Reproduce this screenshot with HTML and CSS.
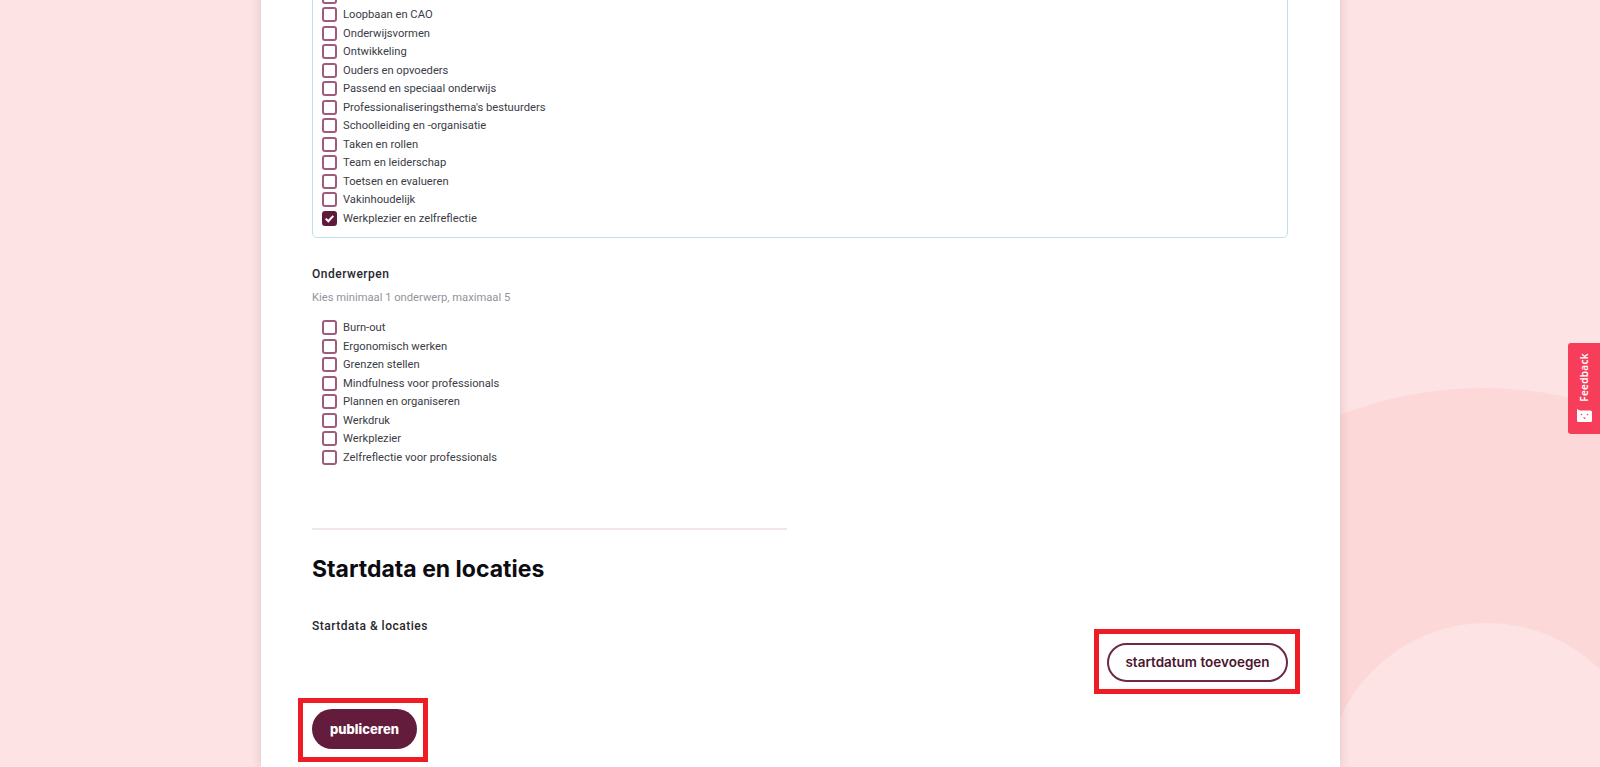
FILE: index.html
```html
<!DOCTYPE html>
<html lang="nl">

<head>
  <meta charset="UTF-8">
  <title>Training bewerken</title>
  <link rel="stylesheet" href="styles.css">
</head>

<body>
  <div class="bg">
    <div class="bg-circle bg-circle--large"></div>
    <div class="bg-circle bg-circle--small"></div>
  </div>

  <main class="card">
    <ul class="check-list check-list--panel">
      <li class="check-row"><span class="check-box"></span></li>
      <li class="check-row"><span class="check-box"></span>Loopbaan en CAO</li>
      <li class="check-row"><span class="check-box"></span>Onderwijsvormen</li>
      <li class="check-row"><span class="check-box"></span>Ontwikkeling</li>
      <li class="check-row"><span class="check-box"></span>Ouders en opvoeders</li>
      <li class="check-row"><span class="check-box"></span>Passend en speciaal onderwijs</li>
      <li class="check-row"><span class="check-box"></span>Professionaliseringsthema's bestuurders</li>
      <li class="check-row"><span class="check-box"></span>Schoolleiding en -organisatie</li>
      <li class="check-row"><span class="check-box"></span>Taken en rollen</li>
      <li class="check-row"><span class="check-box"></span>Team en leiderschap</li>
      <li class="check-row"><span class="check-box"></span>Toetsen en evalueren</li>
      <li class="check-row"><span class="check-box"></span>Vakinhoudelijk</li>
      <li class="check-row">
        <span class="check-box check-box--on">
          <svg viewBox="0 0 16 16" width="13" height="13"><path d="M2.5 8.2 L6.3 12 L13.5 4.2" fill="none" stroke="#fff" stroke-width="3"></path></svg>
        </span>Werkplezier en zelfreflectie
      </li>
    </ul>

    <h3 class="field-label field-label--topics">Onderwerpen</h3>
    <p class="field-hint">Kies minimaal 1 onderwerp, maximaal 5</p>

    <ul class="check-list check-list--plain">
      <li class="check-row"><span class="check-box"></span>Burn-out</li>
      <li class="check-row"><span class="check-box"></span>Ergonomisch werken</li>
      <li class="check-row"><span class="check-box"></span>Grenzen stellen</li>
      <li class="check-row"><span class="check-box"></span>Mindfulness voor professionals</li>
      <li class="check-row"><span class="check-box"></span>Plannen en organiseren</li>
      <li class="check-row"><span class="check-box"></span>Werkdruk</li>
      <li class="check-row"><span class="check-box"></span>Werkplezier</li>
      <li class="check-row"><span class="check-box"></span>Zelfreflectie voor professionals</li>
    </ul>

    <hr class="divider">

    <h2 class="section-title">Startdata en locaties</h2>
    <h3 class="field-label field-label--dates">Startdata &amp; locaties</h3>

    <div class="add-row">
      <span class="marked marked--add">
        <button class="btn btn--outline" type="button">startdatum toevoegen</button>
      </span>
    </div>

    <span class="marked marked--publish">
      <button class="btn btn--solid" type="button">publiceren</button>
    </span>
  </main>

  <aside class="feedback-tab">
    <span class="feedback-tab__text">Feedback</span>
    <svg class="feedback-tab__icon" viewBox="0 0 15 13" width="15" height="13">
      <path d="M0 0 L3 1.5 L13.5 1.5 Q15 1.5 15 3 L15 11.5 Q15 13 13.5 13 L1.5 13 Q0 13 0 11.5 Z" fill="#fff"></path>
      <circle cx="4.5" cy="5.5" r="0.8" fill="#f63e5b"></circle>
      <circle cx="10.5" cy="5.5" r="0.8" fill="#f63e5b"></circle>
      <path d="M6 8.5 L9 8.5 L7.5 10.2 Z" fill="#f63e5b"></path>
    </svg>
  </aside>
</body>

</html>
```
FILE: styles.css
```css
html,
body {
  height: 100%;
}

body {
  background-color: #fde3e4;
  color: #3c3c46;
  font-family: Roboto, "Noto Sans", Arial, sans-serif;
  font-size: 11.2px;
  margin: 0;
  overflow: hidden;
  position: relative;
}

.bg {
  inset: 0;
  overflow: hidden;
  position: absolute;
}

.bg-circle {
  border-radius: 50%;
  position: absolute;
}

.bg-circle--large {
  background-color: #fdd8d8;
  height: 784px;
  left: 1091px;
  top: 388px;
  width: 784px;
}

.bg-circle--small {
  background-color: #fde3e4;
  height: 322px;
  left: 1326px;
  top: 623px;
  width: 322px;
}

.card {
  background-color: #fff;
  box-shadow: 0 0 10px rgba(120, 60, 70, 0.2);
  box-sizing: border-box;
  height: calc(100% + 22px);
  margin: 0 260px 0 261px;
  padding: 0 52px 0 51px;
  position: relative;
}

.check-list {
  list-style: none;
  margin: 0;
}

.check-list--panel {
  border: 1px solid #bfdded;
  border-radius: 5px;
  margin-top: -22px;
  padding: 8px 9px 9px;
}

.check-list--plain {
  margin-top: 11px;
  padding: 0 10px;
}

.check-row {
  align-items: center;
  display: flex;
  gap: 6px;
  height: 18.5px;
}

.check-box {
  align-items: center;
  background-color: #fff;
  border: 2px solid #a05a7c;
  border-radius: 3px;
  box-sizing: border-box;
  display: flex;
  flex: none;
  height: 15px;
  justify-content: center;
  width: 15px;
}

.check-box--on {
  background-color: #5f1a3a;
  border-color: #5f1a3a;
}

.field-label {
  color: #26262e;
  font-size: 12px;
  font-weight: 500;
  letter-spacing: 0.5px;
  line-height: 20px;
  margin: 0;
}

.field-label--topics {
  margin-top: 26px;
}

.field-label--dates {
  margin-top: 30px;
}

.field-hint {
  color: #93939b;
  line-height: 20px;
  margin: 4px 0 0;
}

.divider {
  background-color: #f0e5ea;
  border: 0;
  height: 2px;
  margin: 61px 0 0;
  width: 475px;
}

.section-title {
  color: #0c0c10;
  font-family: Inter, "Noto Sans", Arial, sans-serif;
  font-size: 23px;
  font-weight: 700;
  line-height: 34px;
  margin: 22px 0 0;
}

.add-row {
  display: flex;
  justify-content: flex-end;
  margin-top: 7px;
}

/* the red frames that were drawn over the screenshot */
.marked {
  display: inline-block;
  position: relative;
  vertical-align: top;
}

.marked::after {
  border: 5px solid #ee1c25;
  box-sizing: border-box;
  content: "";
  pointer-events: none;
  position: absolute;
}

.marked--add::after {
  inset: -14px -12px -12px -13px;
}

.marked--publish {
  margin-top: 27px;
}

.marked--publish::after {
  inset: -11px -11px -13px -14px;
}

.btn {
  border-radius: 20px;
  box-sizing: border-box;
  display: block;
  font-family: Inter, "Noto Sans", Arial, sans-serif;
  font-size: 13.5px;
  height: 39px;
  padding: 0;
}

.btn--outline {
  background-color: #fff;
  border: 2px solid #6b2a48;
  color: #4c1530;
  font-weight: 600;
  width: 181px;
}

.btn--solid {
  background-color: #641c3c;
  border: 0;
  color: #fff;
  font-size: 13px;
  font-weight: 800;
  height: 40px;
  width: 105px;
}

.feedback-tab {
  align-items: center;
  background-color: #f63e5b;
  border-radius: 3px 0 0 3px;
  box-sizing: border-box;
  color: #fff;
  display: flex;
  flex-direction: column;
  gap: 7px;
  height: 91px;
  padding-top: 10px;
  position: absolute;
  right: 0;
  top: 343px;
  width: 32px;
}

.feedback-tab__text {
  font-family: "Noto Sans", Arial, sans-serif;
  font-size: 10px;
  font-weight: 600;
  letter-spacing: 0.3px;
  line-height: 14px;
  transform: rotate(180deg);
  writing-mode: vertical-rl;
}

.feedback-tab__icon {
  display: block;
}
```
